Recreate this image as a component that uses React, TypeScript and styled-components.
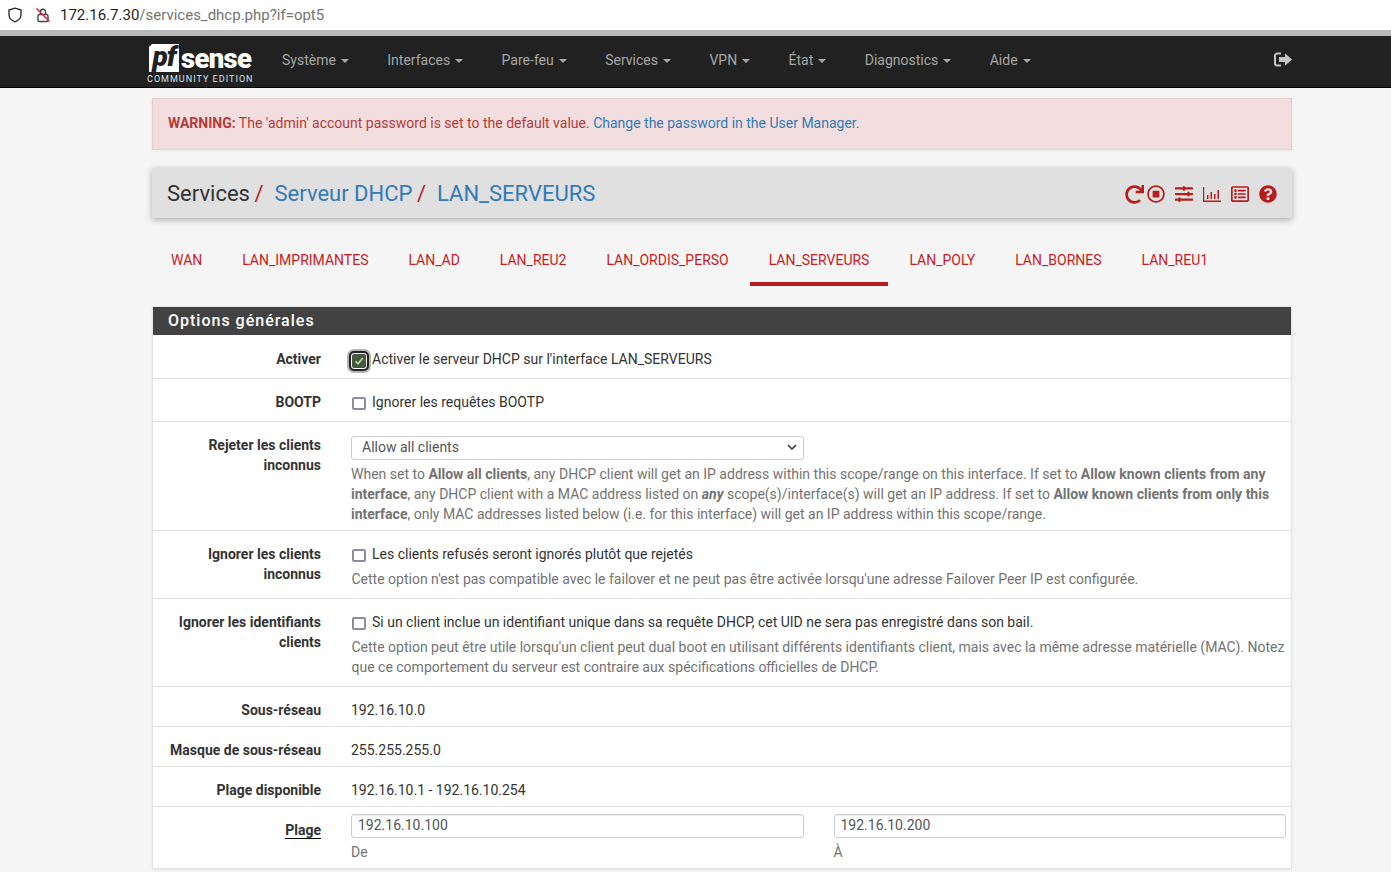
import React from 'react';
import styled, { createGlobalStyle } from 'styled-components';
import { FaRedo, FaRegStopCircle, FaSlidersH, FaRegListAlt, FaQuestionCircle } from 'react-icons/fa';

const Global = createGlobalStyle`
  html, body { margin: 0; padding: 0; background: #f5f5f5; }
  body { font-family: Roboto, "Liberation Sans", sans-serif; font-size: 14px; line-height: 20px; color: #212121; overflow: hidden; height: 872px; }
  * { box-sizing: border-box; }
`;

const UrlBar = styled.div`
  height: 36px; background: #fff; border-bottom: 6px solid #b9b9b9;
  display: flex; align-items: center; padding: 0 0 0 7px;
`;
const UrlIcon = styled.svg`width: 16px; height: 16px; margin-right: 12px; flex: none;`;
const UrlText = styled.span`font-size: 15px; color: #737373; margin-left: -3px;`;
const UrlHost = styled.span`color: #1f1f1f;`;

const Nav = styled.nav`
  height: 52px; background: #212121; border-bottom: 1px solid #000;
  display: flex; align-items: center; padding: 0 99px 4px 147px;
`;
const Logo = styled.div`width: 106px; margin-right: 29px; flex: none; display: flex; flex-direction: column; margin-top: 10px;`;
const LogoTop = styled.div`display: flex; align-items: center; height: 28px;`;
const LogoPf = styled.span`
  background: #fff; color: #212121; width: 30px; height: 28px; margin-left: 2px; margin-right: 2px;
  clip-path: polygon(3px 0, 100% 0, 100% 100%, 0 100%, 0 3px);
  font: italic 900 28px/26px Roboto, sans-serif; text-align: center; letter-spacing: -1px;
`;
const LogoSense = styled.span`color: #fff; font: 900 27.500px/28px Roboto, sans-serif; letter-spacing: -0.7px; margin-top: 1px;`;
const LogoSub = styled.span`color: #d8e4f0; font-size: 9px; line-height: 11px; letter-spacing: 1.02px; white-space: nowrap; margin-top: 2px;`;
const NavItems = styled.div`display: flex; gap: 38.45px; flex: 1;`;
const NavItem = styled.a`color: #a6a6a6; white-space: nowrap; display: flex; align-items: center;`;
const Caret = styled.i`
  display: inline-block; width: 0; height: 0; margin-left: 5px; margin-top: 2px;
  border-top: 4px solid #a6a6a6; border-left: 4px solid transparent; border-right: 4px solid transparent;
`;
const NavIcon = styled.svg`width: 18px; height: 15px; flex: none; margin-top: -1px;`;

const Container = styled.main`width: 1140px; margin: 10px 0 0 152px;`;
const Alert = styled.div`
  height: 52px; background: #f2dede; border: 1px solid #ebccd1; color: #b23c3c; padding: 14px 15px;
  box-shadow: 0 1px 3px rgba(0,0,0,.06);
`;
const Link = styled.a`color: #337ab7;`;
const Header = styled.header`
  height: 50px; margin-top: 18px; background: #e0e0e0; border-radius: 2px; padding: 0 14px 0 15px;
  box-shadow: 0 2px 6px rgba(0,0,0,.3);
  display: flex; align-items: center; justify-content: space-between;
`;
const Crumbs = styled.div`font-size: 22px; line-height: 50px; color: #333; white-space: nowrap; margin-top: 1px;`;
const Sep = styled.span`color: #b71c1c; margin: 0 11px 0 4.5px;`;
const Icons = styled.div`display: flex; align-items: center; color: #b71c1c; font-size: 18px; margin-top: 2px;`;
const IconSlot = styled.span<{ $w: number; $shift?: number }>`
  display: flex; width: ${p => p.$w}px; justify-content: center; margin-left: ${p => p.$shift ?? 0}px;
`;
const Tabs = styled.div`display: flex; gap: 1.95px; margin-top: 20px; height: 48px;`;
const Tab = styled.a<{ $active?: boolean }>`
  color: #c71c22; padding: 12px 19px 0; white-space: nowrap; height: 48px;
  border-bottom: 4px solid ${p => (p.$active ? '#b71c1c' : 'transparent')};
`;
const Panel = styled.section`
  margin: 21px 1px 0; background: #fff; box-shadow: 0 0 0 1px #e4e4e4, 0 1px 3px rgba(0,0,0,.12);
`;
const PanelHead = styled.h2`
  margin: 0; height: 28px; background: #424242; color: #fff; font-size: 16px; font-weight: 500;
  line-height: 27px; letter-spacing: 1px; padding-left: 15px;
`;
const Row = styled.div<{ $top?: number; $bottom?: number }>`
  display: grid; grid-template-columns: 168px 1fr; column-gap: 30px;
  padding: ${p => p.$top ?? 13}px 5px ${p => p.$bottom ?? 9}px 0; border-bottom: 1px solid #e0e0e0;
  &:last-child { border-bottom: 0; }
`;
const Label = styled.div`font-weight: 700; text-align: right; color: #333;`;
const Underlined = styled.span`border-bottom: 1px solid #000;`;
const Value = styled.div`color: #333; min-width: 0;`;
const CheckLine = styled.div`display: flex; align-items: center; color: #333;`;
const Box = styled.span`
  width: 14px; height: 13px; margin: 3px 6px 0 1px; border: 2px solid #8f8d99; border-radius: 2px; background: #fff; flex: none;
`;
const CheckedBox = styled.span`
  width: 16px; height: 16px; margin: 3px 5px 0 0; border-radius: 3px; background: #465a40; flex: none;
  border: 1px solid #fff; outline: 2px solid #222; box-shadow: 0 0 0 4px #b5b5b5;
  display: flex; align-items: center; justify-content: center;
`;
const Help = styled.p<{ $indent?: boolean }>`
  margin: 0; color: #737373; white-space: nowrap; padding-left: ${p => (p.$indent ? 0.5 : 0)}px;
  &:first-of-type { margin-top: 5px; }
`;
const HelpStrong = styled.b`font-weight: 700;`;
const HelpEm = styled.b`font-weight: 700; font-style: italic;`;
const SelectBox = styled.div`
  width: 453px; height: 24px; margin: 1px 0 -1px; border: 1px solid #ccc; border-radius: 3px; background: #fff; color: #555;
  padding: 0 6px 2px 10px; display: flex; align-items: center; justify-content: space-between; line-height: 20px;
`;
const RangeGrid = styled.div`display: grid; grid-template-columns: 452.5px 452px; column-gap: 30px; margin-top: -6px;`;
const Input = styled.div`
  height: 24px; border: 1px solid #ccc; border-radius: 3px; padding: 0 6px; line-height: 20px; color: #555; background: #fff;
  box-shadow: inset 0 1px 1px rgba(0,0,0,.075);
`;
const Hint = styled.div`color: #737373; margin-top: 4px;`;

const tabs = ['WAN','LAN_IMPRIMANTES','LAN_AD','LAN_REU2','LAN_ORDIS_PERSO','LAN_SERVEURS','LAN_POLY','LAN_BORNES','LAN_REU1'];
const menu = ['Système','Interfaces','Pare-feu','Services','VPN','État','Diagnostics','Aide'];

export default function App() {
  return (
    <>
      <Global />
      <UrlBar>
        <UrlIcon viewBox="0 0 16 16" fill="none" stroke="#333" strokeWidth="1.4">
          <path d="M8 1.2 2 3v4.500c0 3.400 2.600 6 6 7.300 3.400-1.300 6-3.900 6-7.300V3z" strokeLinejoin="round" />
        </UrlIcon>
        <UrlIcon viewBox="0 0 16 16" fill="none">
          <rect x="3" y="7.500" width="10" height="7" rx="1.500" stroke="#444" strokeWidth="1.400" />
          <path d="M5.500 7.500V4.800a2.500 2.500 0 0 1 5 0v2.700" stroke="#444" strokeWidth="1.400" />
          <path d="M1.500 1.500 14.500 14.500" stroke="#e0264f" strokeWidth="1.600" />
        </UrlIcon>
        <UrlText><UrlHost>172.16.7.30</UrlHost>/services_dhcp.php?if=opt5</UrlText>
      </UrlBar>
      <Nav>
        <Logo>
          <LogoTop><LogoPf>pf</LogoPf><LogoSense>sense</LogoSense></LogoTop>
          <LogoSub>COMMUNITY EDITION</LogoSub>
        </Logo>
        <NavItems>
          {menu.map(m => <NavItem key={m}>{m}<Caret /></NavItem>)}
        </NavItems>
        <NavIcon viewBox="0 0 18 15">
          <path d="M7 1.500H3.200A2.200 2.200 0 0 0 1 3.700v7.600a2.200 2.200 0 0 0 2.200 2.200H7" fill="none" stroke="#c4c4c4" strokeWidth="2" />
          <path d="M5 5h6V1.200L18 7.500l-7 6.300V10H5z" fill="#c4c4c4" />
        </NavIcon>
      </Nav>
      <Container>
        <Alert>
          <b>WARNING:</b> The 'admin' account password is set to the default value. <Link>Change the password in the User Manager.</Link>
        </Alert>
        <Header>
          <Crumbs>Services<Sep>/</Sep><Link>Serveur DHCP</Link><Sep>/</Sep><Link>LAN_SERVEURS</Link></Crumbs>
          <Icons>
            <IconSlot $w={20} $shift={-2}><FaRedo size={19} /></IconSlot>
            <IconSlot $w={20} $shift={2}><FaRegStopCircle size={18} /></IconSlot>
            <IconSlot $w={36}><FaSlidersH size={18} /></IconSlot>
            <IconSlot $w={20}>
              <svg width="18" height="16" viewBox="0 0 18 16" fill="#b71c1c">
                <path d="M0 1h1.200v13.400H18V16H0z" />
                <path d="M4 9h1.500v4H4zM7.500 6H9v7H7.500zM11 8h1.500v5H11zM14.500 4H16v9h-1.500z" />
              </svg>
            </IconSlot>
            <IconSlot $w={36}><FaRegListAlt size={18} /></IconSlot>
            <IconSlot $w={20}><FaQuestionCircle size={18} /></IconSlot>
          </Icons>
        </Header>
        <Tabs>
          {tabs.map(t => <Tab key={t} $active={t === 'LAN_SERVEURS'}>{t}</Tab>)}
        </Tabs>
        <Panel>
          <PanelHead>Options générales</PanelHead>
          <Row $top={14}>
            <Label>Activer</Label>
            <Value><CheckLine>
              <CheckedBox>
                <svg width="10" height="10" viewBox="0 0 10 10" fill="none" stroke="#b9dca5" strokeWidth="1.600"><path d="M1.500 5.200 4 7.700 8.700 2" /></svg>
              </CheckedBox>
              Activer le serveur DHCP sur l'interface LAN_SERVEURS
            </CheckLine></Value>
          </Row>
          <Row>
            <Label>BOOTP</Label>
            <Value><CheckLine><Box />Ignorer les requêtes BOOTP</CheckLine></Value>
          </Row>
          <Row $bottom={6}>
            <Label>Rejeter les clients inconnus</Label>
            <Value>
              <SelectBox>
                Allow all clients
                <svg width="10" height="6" viewBox="0 0 10 6" fill="none" stroke="#333" strokeWidth="1.500"><path d="M1 1l4 4 4-4" /></svg>
              </SelectBox>
              <Help>When set to <HelpStrong>Allow all clients</HelpStrong>, any DHCP client will get an IP address within this scope/range on this interface. If set to <HelpStrong>Allow known clients from any</HelpStrong></Help>
              <Help><HelpStrong>interface</HelpStrong>, any DHCP client with a MAC address listed on <HelpEm>any</HelpEm> scope(s)/interface(s) will get an IP address. If set to <HelpStrong>Allow known clients from only this</HelpStrong></Help>
              <Help><HelpStrong>interface</HelpStrong>, only MAC addresses listed below (i.e. for this interface) will get an IP address within this scope/range.</Help>
            </Value>
          </Row>
          <Row>
            <Label>Ignorer les clients inconnus</Label>
            <Value>
              <CheckLine><Box />Les clients refusés seront ignorés plutôt que rejetés</CheckLine>
              <Help $indent>Cette option n'est pas compatible avec le failover et ne peut pas être activée lorsqu'une adresse Failover Peer IP est configurée.</Help>
            </Value>
          </Row>
          <Row>
            <Label>Ignorer les identifiants clients</Label>
            <Value>
              <CheckLine><Box />Si un client inclue un identifiant unique dans sa requête DHCP, cet UID ne sera pas enregistré dans son bail.</CheckLine>
              <Help $indent>Cette option peut être utile lorsqu'un client peut dual boot en utilisant différents identifiants client, mais avec la même adresse matérielle (MAC). Notez</Help>
              <Help $indent>que ce comportement du serveur est contraire aux spécifications officielles de DHCP.</Help>
            </Value>
          </Row>
          <Row $bottom={6}><Label>Sous-réseau</Label><Value>192.16.10.0</Value></Row>
          <Row $bottom={6}><Label>Masque de sous-réseau</Label><Value>255.255.255.0</Value></Row>
          <Row $bottom={6}><Label>Plage disponible</Label><Value>192.16.10.1 - 192.16.10.254</Value></Row>
          <Row $bottom={6}>
            <Label><Underlined>Plage</Underlined></Label>
            <RangeGrid>
              <div><Input>192.16.10.100</Input><Hint>De</Hint></div>
              <div><Input>192.16.10.200</Input><Hint>À</Hint></div>
            </RangeGrid>
          </Row>
        </Panel>
      </Container>
    </>
  );
}
